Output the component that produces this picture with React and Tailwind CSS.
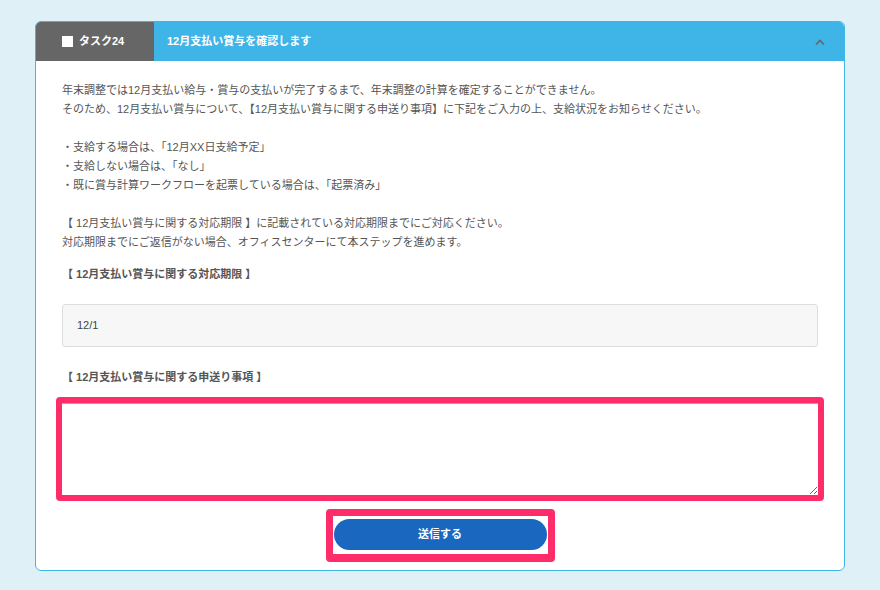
import { useState } from 'react';

const NOTES = [
  '・支給する場合は、「12月XX日支給予定」',
  '・支給しない場合は、「なし」',
  '・既に賞与計算ワークフローを起票している場合は、「起票済み」',
];

export default function App() {
  const [open, setOpen] = useState(true);
  const [memo, setMemo] = useState('');

  return (
    <div className="min-h-screen bg-[#dff0f7] pt-[21px] pl-[35px] font-['Liberation_Sans','Noto_Sans_CJK_JP',sans-serif]">
      <div className="w-[810px] rounded-[6px] border border-[#3eb6e6] bg-white overflow-hidden">

        {/* Task header */}
        <div className="flex h-[39px] bg-[#3fb5e7]">
          <div className="w-[118px] bg-[#666666] flex items-center pl-[26px] gap-[6px]">
            <span className="w-[11px] h-[11px] bg-white" />
            <span className="text-[11px] font-bold text-white">タスク24</span>
          </div>
          <div className="flex-1 flex items-center pl-[13px] pr-[15px]">
            <span className="text-[11px] font-bold text-white">12月支払い賞与を確認します</span>
            <button onClick={() => setOpen(!open)} className="ml-auto p-1">
              <svg width="10" height="6" viewBox="0 0 10 6" className={open ? '' : 'rotate-180'}>
                <polyline points="1,5.5 5,1.5 9,5.5" fill="none" stroke="#666" strokeWidth="1.6" />
              </svg>
            </button>
          </div>
        </div>

        {open && (
          <div className="px-[26px] pt-[20px] pb-[8px] text-[11px] leading-[19px] text-[#555]">
            <p>
              年末調整では12月支払い給与・賞与の支払いが完了するまで、年末調整の計算を確定することができません。
              <br />
              そのため、12月支払い賞与について、【12月支払い賞与に関する申送り事項】に下記をご入力の上、支給状況をお知らせください。
            </p>
            <div className="mt-[19px]">
              {NOTES.map((n) => (
                <p key={n}>{n}</p>
              ))}
            </div>
            <p className="mt-[19px]">
              【 12月支払い賞与に関する対応期限 】に記載されている対応期限までにご対応ください。
              <br />
              対応期限までにご返信がない場合、オフィスセンターにて本ステップを進めます。
            </p>

            {/* Deadline */}
            <p className="mt-[13px] font-bold">【 12月支払い賞与に関する対応期限 】</p>
            <div className="mt-[20px] h-[43px] rounded-[3px] border border-[#dddddd] bg-[#f7f7f7] flex items-center pl-[14px] text-[#444]">
              12/1
            </div>

            {/* Handover memo */}
            <p className="mt-[21px] font-bold">【 12月支払い賞与に関する申送り事項 】</p>
            <div className="mt-[10px] -mx-[6px] rounded-[4px] border-[6px] border-[#fe2c68]">
              <textarea
                value={memo}
                onChange={(e) => setMemo(e.target.value)}
                className="block w-full h-[92px] border-t border-[#aaaaaa] bg-white text-[11px] p-2 outline-none"
              />
            </div>

            <div className="mt-[8px] flex justify-center">
              <div className="rounded-[4px] border-[7px] border-b-[8px] border-[#fe2c68] px-[1px] pt-[3px] pb-[4px]">
                <button className="block w-[213px] h-[31px] rounded-full bg-[#1a67c0] text-[11px] font-bold text-white">
                  送信する
                </button>
              </div>
            </div>
          </div>
        )}
      </div>
    </div>
  );
}
